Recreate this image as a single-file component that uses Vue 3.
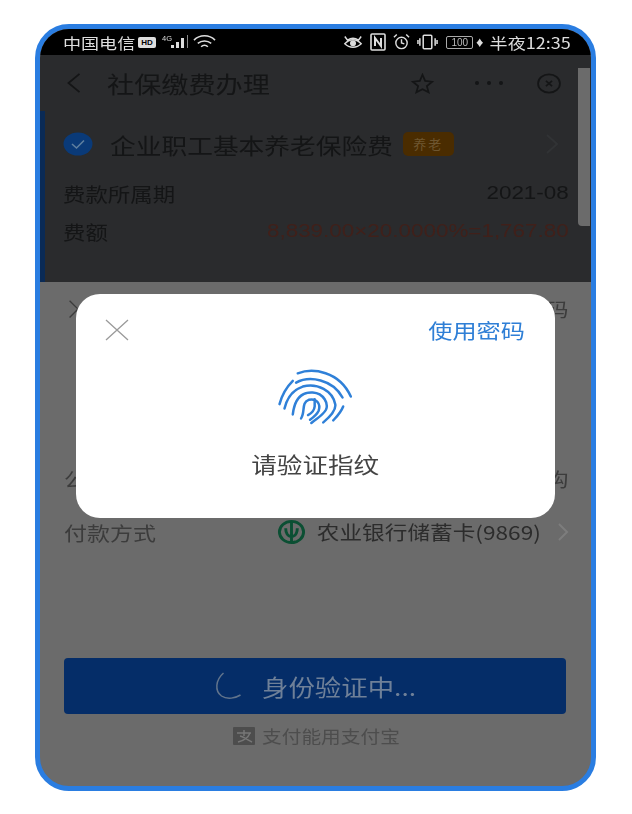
<template>
  <div class="page">
    <div class="phone">
      <div class="status">
        <div class="status-left">
          <span class="wide carrier">中国电信</span>
          <span class="hd">HD</span>
          <svg width="28" height="16" viewBox="0 0 28 16"><text x="0" y="7" font-size="7.500" fill="#ddd" font-family="Liberation Sans">4G</text><rect x="9" y="11" width="3" height="3" fill="#ddd"/><rect x="14" y="8" width="3" height="6" fill="#ddd"/><rect x="19" y="4" width="3" height="10" fill="#ddd"/><rect x="25" y="1" width="1" height="13" fill="#888"/></svg>
          <svg class="wifi" width="23" height="16" viewBox="0 0 24 16" fill="none" stroke="#ddd" stroke-width="1.6"><path d="M1 6C7 0 17 0 23 6"/><path d="M5 9.500C9 6 15 6 19 9.500"/><path d="M8.500 13C10.500 11 13.500 11 15.500 13"/></svg>
        </div>
        <div class="status-right">
          <svg class="s-eye" width="20" height="16" viewBox="0 0 22 16" fill="none" stroke="#ddd" stroke-width="1.600"><path d="M2 2L5 6C9 3 13 3 17 6L20 2"/><path d="M2 10C7 4 15 4 20 10C15 15 7 15 2 10Z"/><circle cx="11" cy="9.500" r="2.500" fill="#ddd"/></svg>
          <svg class="s-icon" width="16" height="18" viewBox="0 0 16 18" fill="none" stroke="#ddd" stroke-width="1.600"><rect x="1" y="1" width="14" height="16" rx="1"/><path d="M5 13V5L11 13V5" stroke-width="2"/></svg>
          <svg class="s-icon" width="17" height="18" viewBox="0 0 18 18" fill="none" stroke="#ddd" stroke-width="1.500"><circle cx="9" cy="10" r="6"/><path d="M9 6V10L12 11M1 4L4 1M17 4L14 1"/></svg>
          <svg class="s-icon" width="21" height="16" viewBox="0 0 22 16" fill="none" stroke="#ddd" stroke-width="1.600"><rect x="6.500" y="1" width="9" height="14" rx="1"/><path d="M3 4V12M19 4V12M1 6V10M21 6V10"/></svg>
          <span class="battery">100</span>
          <span class="bolt">♦</span>
          <span class="wide-r clock">半夜12:35</span>
        </div>
      </div>

      <div class="nav">
        <svg class="back" width="16" height="22" viewBox="0 0 16 24" fill="none" stroke="#141516" stroke-width="2"><path d="M14 2L2 12L14 22"/></svg>
        <span class="wide nav-title">社保缴费办理</span>
        <svg class="star" width="25" height="21" viewBox="0 0 26 24" fill="none" stroke="#141516" stroke-width="2"><path d="M13 2L16 9L24 10L18 15L20 22L13 18.500L6 22L8 15L2 10L10 9Z"/></svg>
        <span class="dots"><i></i><i></i><i></i></span>
        <svg width="28" height="21" viewBox="0 0 28 24" fill="none" stroke="#141516" stroke-width="2"><ellipse cx="14" cy="12" rx="12.500" ry="10.500"/><path d="M10.500 9L17.500 15M17.500 9L10.500 15"/></svg>
      </div>

      <div class="card">
        <div class="card-head">
          <svg width="30" height="24" viewBox="0 0 30 24"><ellipse cx="15" cy="12" rx="14.500" ry="11.500" fill="#0a3a78"/><path d="M9 12L13.500 16L21 8.500" fill="none" stroke="#5f7f9f" stroke-width="1.600"/></svg>
          <span class="wide card-title">企业职工基本养老保险费</span>
          <span class="tag">养老</span>
          <svg class="card-arrow" width="14" height="22" viewBox="0 0 14 22" fill="none" stroke="#313335" stroke-width="2"><path d="M2 2L12 11L2 20"/></svg>
        </div>
        <div class="row row-first">
          <span class="wide">费款所属期</span>
          <span class="wide-r num">2021-08</span>
        </div>
        <div class="row">
          <span class="wide">费额</span>
          <span class="wide-r num amount">8,839.00×20.0000%=1,767.80</span>
        </div>
      </div>

      <div class="lower">
        <div class="lower-top">
          <span class="cross">×</span>
          <span class="wide-r">码</span>
        </div>
        <div class="lower-mid">
          <span class="wide">公</span>
          <span class="wide-r">构</span>
        </div>
        <div class="pay-row">
          <span class="wide">付款方式</span>
          <div class="pay-value">
            <svg class="abc" width="29" height="26" viewBox="0 0 30 26" fill="none" stroke="#0b4f33" stroke-width="3"><ellipse cx="15" cy="13" rx="12.500" ry="11"/><path d="M15 2V24M9 9C9 15 11 17 15 18C19 17 21 15 21 9"/></svg>
            <span class="wide-r">农业银行储蓄卡(9869)</span>
            <svg class="pay-arrow" width="12" height="20" viewBox="0 0 12 20" fill="none" stroke="#7d7d7d" stroke-width="2"><path d="M2 2L10 10L2 18"/></svg>
          </div>
        </div>
        <button class="verify">
          <svg width="29" height="28" viewBox="0 0 28 28" fill="none" stroke="#62748c" stroke-width="1.500"><path d="M10 1C2 8 1 19 8 24C14 28 22 26 27 23"/></svg>
          <span class="wide verify-label">身份验证中...</span>
        </button>
        <div class="foot">
          <svg width="22" height="18" viewBox="0 0 22 18"><rect width="22" height="18" rx="1" fill="#4d4d4d"/><path d="M4 6H18M11 3V9M17 6C15 11 10 14 5 15M7 9C11 10 15 13 19 15" fill="none" stroke="#777" stroke-width="1.500"/></svg>
          <span class="wide foot-label">支付能用支付宝</span>
        </div>
      </div>

      <div class="scrollbar"></div>

      <div class="modal">
        <div class="modal-top">
          <svg width="24" height="22" viewBox="0 0 24 22" fill="none" stroke="#9a9a9a" stroke-width="1.300"><path d="M1 1L23 21M23 1L1 21"/></svg>
          <span class="wide-r use-pwd">使用密码</span>
        </div>
        <svg class="print" width="80" height="63" viewBox="140 50 240 190" fill="none" stroke="#2f80d8" stroke-width="7.500" stroke-linecap="round">
          <path d="M205 72C250 55 330 65 365 142"/>
          <path d="M150 165C158 135 170 115 190 95"/>
          <path d="M200 100C240 78 310 90 340 145"/>
          <path d="M342 172C335 190 325 200 312 214"/>
          <path d="M165 178C172 148 190 122 220 112C265 100 310 125 318 165C322 185 300 205 282 220"/>
          <path d="M190 196C195 152 215 128 250 130C285 132 298 165 290 182C280 200 262 208 246 222"/>
          <path d="M215 208C228 190 215 160 238 152C262 146 275 165 268 185C262 198 252 205 242 212"/>
          <path d="M256 150V172C255 182 248 192 236 198"/>
        </svg>
        <div class="wide-c verify-text">请验证指纹</div>
      </div>
    </div>
  </div>
</template>

<script setup>
</script>

<style>
html, body {
  margin: 0;
  background: #fff;
}
</style>

<style scoped>
.page {
  padding: 24px 35px;
  width: 632px;
  height: 814px;
  box-sizing: border-box;
  font-family: "Noto Sans CJK SC", "Liberation Sans", sans-serif;
  overflow: hidden;
}

.phone {
  position: relative;
  width: 561px;
  height: 767px;
  box-sizing: border-box;
  border: 5px solid #2a7de1;
  border-radius: 34px;
  overflow: hidden;
  background: #6b6b6b;
  display: flex;
  flex-direction: column;
  filter: blur(0.5px);
}

/* the whole source shot is stretched sideways, so the text is too */
.wide, .wide-r, .wide-c {
  display: inline-block;
  transform: scaleX(1.18);
  transform-origin: left center;
}

.wide-r {
  transform-origin: right center;
}

.wide-c {
  transform-origin: center;
}

.status {
  height: 26px;
  flex: none;
  background: #000;
  color: #ddd;
  display: flex;
  align-items: center;
  justify-content: space-between;
  padding: 0 20px 0 23px;
  font-size: 15.300px;
}

.status-left, .status-right {
  display: flex;
  align-items: center;
}

.carrier {
  margin-right: 14px;
}

.hd {
  background: #ddd;
  color: #000;
  font-family: "Liberation Sans", sans-serif;
  font-size: 8px;
  font-weight: 700;
  line-height: 11px;
  padding: 0 3px;
  border-radius: 2px;
  margin-right: 6px;
}

.wifi {
  margin-left: 3px;
}

.s-icon {
  margin-left: 7px;
}

.battery {
  margin-left: 8px;
  border: 1px solid #aaa;
  border-radius: 2px;
  font-size: 10px;
  line-height: 11px;
  padding: 0 4px;
  color: #bbb;
  font-family: "Liberation Sans", sans-serif;
}

.bolt {
  font-size: 9px;
  margin-left: 2px;
  margin-right: 18px;
}

.nav {
  height: 56px;
  flex: none;
  background: #2a2b2d;
  display: flex;
  align-items: center;
  padding: 0 28px 0 26px;
  color: #141516;
}

.nav-title {
  margin-left: 25px;
  font-size: 23px;
  flex: 1;
}

.star {
  margin-right: 40px;
}

.dots {
  display: flex;
  gap: 8px;
  margin-right: 32px;
}

.dots i {
  width: 4px;
  height: 4px;
  border-radius: 50%;
  background: #141516;
}

.card {
  flex: none;
  height: 171px;
  box-sizing: border-box;
  background: #2a2b2d;
  border-left: 5px solid #0a2a55;
  padding: 15px 22px 0 18px;
  color: #141516;
}

.card-head {
  display: flex;
  align-items: center;
  height: 36px;
}

.card-title {
  margin-left: 17px;
  font-size: 21.800px;
}

.tag {
  background: #4a2c00;
  color: #6e5630;
  font-size: 13px;
  line-height: 24px;
  width: 51px;
  text-align: center;
  border-radius: 5px;
  letter-spacing: 2px;
  margin-left: 53px;
}

.card-arrow {
  margin-left: auto;
  margin-right: 10px;
}

.row {
  display: flex;
  justify-content: space-between;
  align-items: center;
  height: 38px;
  font-size: 19px;
}

.row-first {
  margin-top: 12px;
}

.num {
  font-family: "Liberation Sans", sans-serif;
}

.amount {
  color: #40201a;
}

.lower {
  flex: 1;
  padding: 0 22px 0 24px;
  color: #3c3c3c;
  font-size: 19.500px;
  display: flex;
  flex-direction: column;
}

.lower-top, .lower-mid {
  display: flex;
  justify-content: space-between;
  height: 32px;
  align-items: center;
}

.lower-top {
  margin-top: 10px;
}

.cross {
  font-size: 28px;
  font-weight: 300;
  line-height: 32px;
}

.lower-mid {
  margin-top: 138px;
}

.pay-row {
  margin-top: 22px;
  display: flex;
  align-items: center;
  justify-content: space-between;
  height: 32px;
}

.pay-value {
  display: flex;
  align-items: center;
  color: #2c2c2c;
  font-size: 19.200px;
}

.abc {
  margin-right: 45px;
}

.pay-arrow {
  margin-left: 16px;
}

.verify {
  margin-top: 110px;
  height: 56px;
  flex: none;
  width: 502px;
  border: none;
  border-radius: 4px;
  background: #052d68;
  color: #6f8098;
  font-family: inherit;
  font-size: 22.400px;
  display: flex;
  align-items: center;
  justify-content: center;
  gap: 20px;
  padding: 0;
}

.verify-label {
  margin-right: 24px;
}

.foot {
  margin-top: 10px;
  display: flex;
  justify-content: center;
  align-items: center;
  gap: 7px;
  font-size: 16.700px;
  color: #4d4d4d;
}

.foot-label {
  margin-right: 21px;
}

.scrollbar {
  position: absolute;
  top: 39px;
  right: 1px;
  width: 12px;
  height: 158px;
  background: #6b6b6b;
  border-bottom-left-radius: 4px;
}

.modal {
  position: absolute;
  left: 36px;
  top: 265px;
  width: 479px;
  height: 224px;
  background: #fff;
  border-radius: 24px;
  display: flex;
  flex-direction: column;
  align-items: center;
}

.modal-top {
  width: 100%;
  box-sizing: border-box;
  display: flex;
  justify-content: space-between;
  align-items: center;
  padding: 21px 30px 0 29px;
}

.use-pwd {
  color: #2f7fd6;
  font-size: 20.500px;
}

.print {
  margin-top: 21px;
}

.verify-text {
  margin-top: 19px;
  font-size: 21.700px;
  color: #444;
}
</style>
